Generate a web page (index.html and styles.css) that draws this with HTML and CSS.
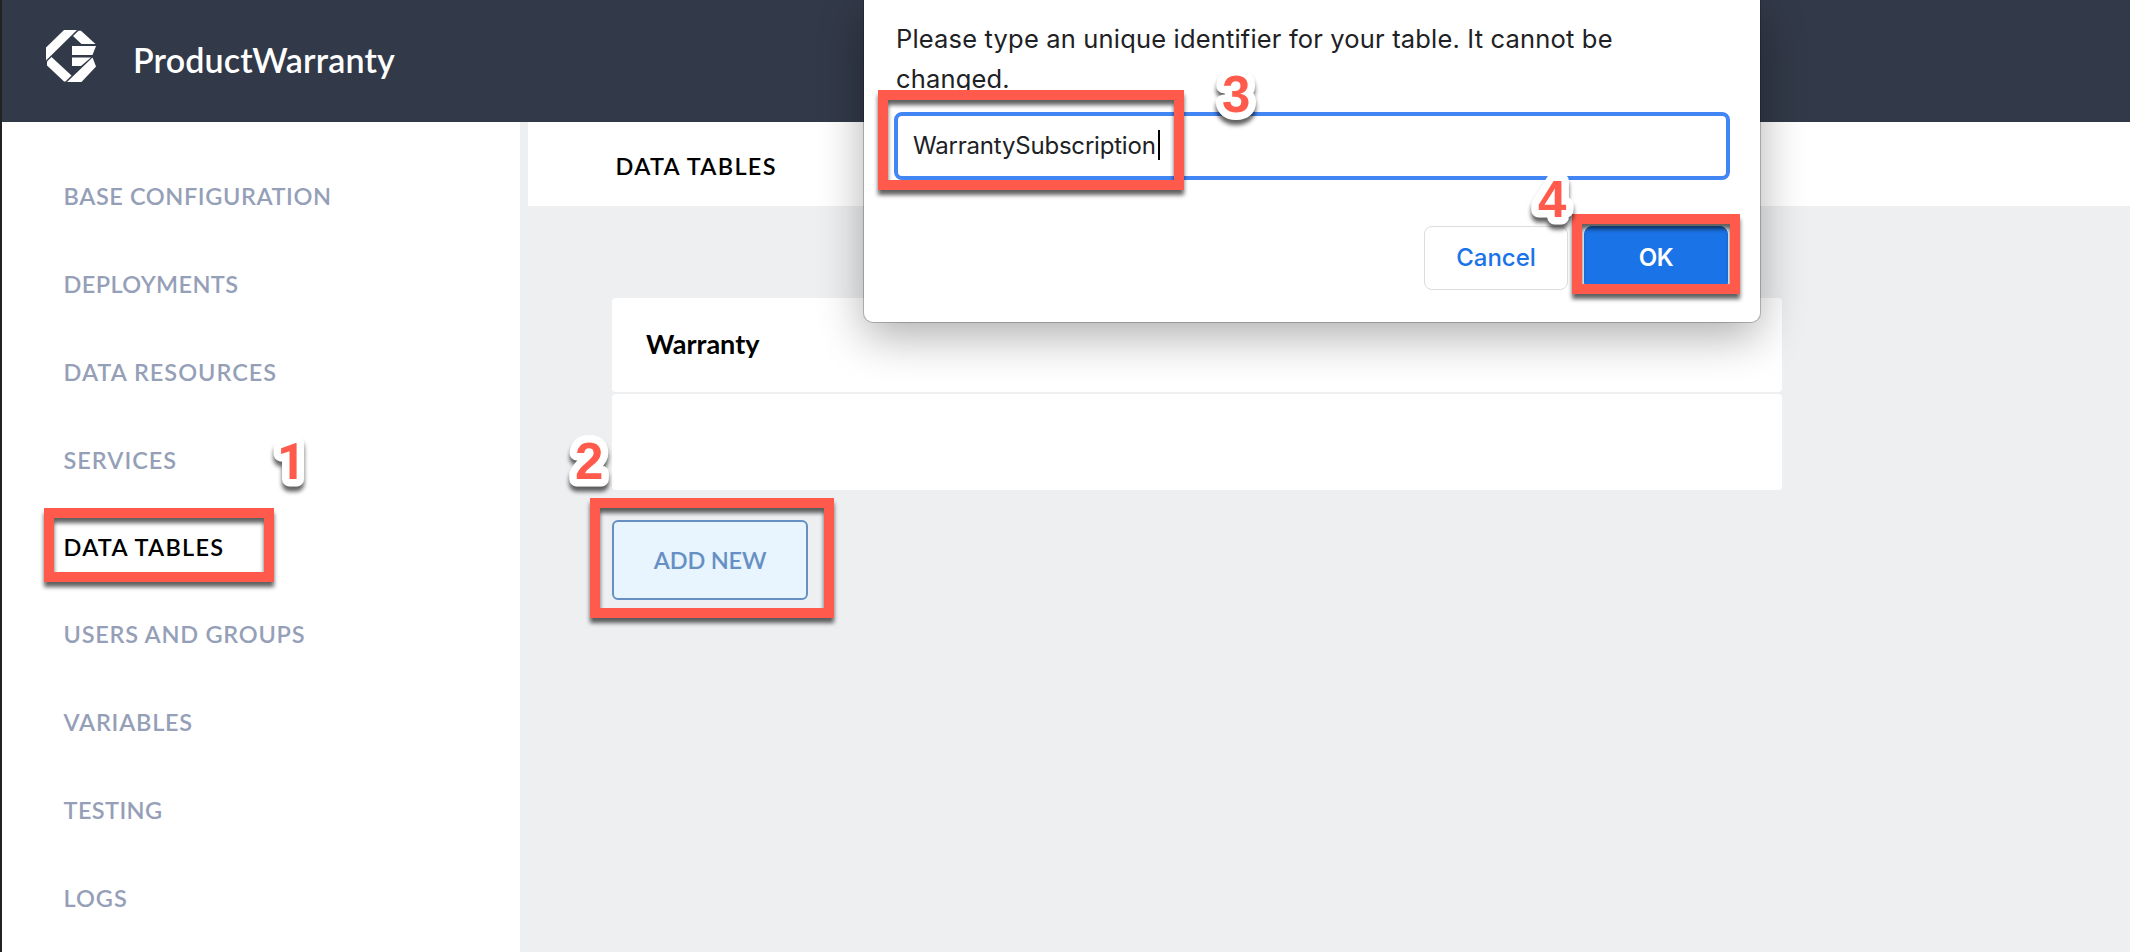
FILE: index.html
```html
<!DOCTYPE html>
<html lang="en">
<head>
<meta charset="utf-8">
<title>ProductWarranty</title>
<link rel="stylesheet" href="styles.css">
</head>
<body>
<div class="app">
  <header class="topbar">
    <svg class="logo" width="50" height="52" viewBox="0 0 50 52" fill="#fff">
      <path d="M18 0H31L0 30.500V17.500Z"/>
      <path d="M32.500 0.800H35L49.500 14H35.500L27 6Z"/>
      <path d="M26 16H50L46.500 25H26Z"/>
      <path d="M26 27.500H45L35 36H26Z"/>
      <path d="M1 31.500L5.500 27L25.500 45.500L19.500 51.500H18L1 35.500Z"/>
      <path d="M46.500 27.500L50 36.500L35.500 52H21Z"/>
    </svg>
    <h1 class="title">ProductWarranty</h1>
  </header>
  <div class="body">
    <nav class="sidebar">
      <a class="item">BASE CONFIGURATION</a>
      <a class="item tight">DEPLOYMENTS</a>
      <a class="item wide">DATA RESOURCES</a>
      <a class="item wide">SERVICES</a>
      <a class="item active">DATA TABLES</a>
      <a class="item semi">USERS AND GROUPS</a>
      <a class="item semi">VARIABLES</a>
      <a class="item tight">TESTING</a>
      <a class="item wide">LOGS</a>
    </nav>
    <main class="main">
      <div class="page-head">DATA TABLES</div>
      <div class="content">
        <div class="row">Warranty</div>
        <div class="row"></div>
        <button class="add">ADD NEW</button>
      </div>
    </main>
  </div>
</div>

<div class="dialog">
  <p class="message">Please type an unique identifier for your table. It cannot be<br>changed.</p>
  <div class="field">WarrantySubscription<i class="caret"></i></div>
  <div class="actions">
    <button class="btn">Cancel</button>
    <button class="btn primary">OK</button>
  </div>
</div>

<div class="mark mark-1"></div>
<div class="mark mark-2"></div>
<div class="mark mark-3"></div>
<div class="mark mark-4"></div>
<svg class="step step-1" width="60" height="70"><text x="17" y="52">1</text></svg>
<svg class="step step-2" width="60" height="70"><text x="16" y="52">2</text></svg>
<svg class="step step-3" width="60" height="70"><text x="16" y="52">3</text></svg>
<svg class="step step-4" width="60" height="70"><text x="16" y="52">4</text></svg>
</body>
</html>
```
FILE: styles.css
```css
* { box-sizing: border-box; }
body {
  margin: 0;
  width: 2130px;
  height: 952px;
  overflow: hidden;
  position: relative;
  font-family: Lato, "Open Sans", sans-serif;
  color: #000;
}
.app {
  height: 952px;
  border-left: 2px solid #222224;
  background: #eeeff1;
  display: flex;
  flex-direction: column;
}
.topbar {
  height: 122px;
  flex: none;
  background: #323948;
  display: flex;
  align-items: flex-start;
  padding: 30px 0 0 44px;
  gap: 37px;
}
.title {
  margin: 10px 0 0;
  font-size: 34px;
  line-height: 40px;
  font-weight: 600;
  letter-spacing: 0.150px;
  color: #fff;
}
.body { flex: 1; display: flex; gap: 8px; }
.sidebar {
  width: 518px;
  flex: none;
  background: #fff;
  padding: 29px 0 0 61.500px;
}
.item {
  display: flex;
  align-items: center;
  height: 88px;
  padding-top: 1px;
  font-size: 23.500px;
  font-weight: 600;
  letter-spacing: 0.600px;
  color: #969fb8;
}
.item.tight { letter-spacing: 0.400px; }
.item.semi { letter-spacing: 0.750px; }
.item.wide { letter-spacing: 1px; }
.item.active { color: #000; height: 86px; letter-spacing: 1.250px; }
.main { flex: 1; }
.page-head {
  height: 84px;
  background: #fff;
  display: flex;
  align-items: center;
  padding: 3px 0 0 87.500px;
  font-size: 23.500px;
  font-weight: 600;
  letter-spacing: 1.300px;
}
.content {
  padding: 92px 348px 0 84px;
  display: flex;
  flex-direction: column;
  align-items: flex-start;
}
.row {
  width: 1170px;
  height: 94px;
  margin-bottom: 2px;
  border-radius: 4px;
  background: #fff;
  display: flex;
  align-items: center;
  padding: 0 0 3px 34px;
  font-size: 27px;
  font-weight: 700;
}
.row + .row { height: 96px; margin-bottom: 30px; }
.add {
  width: 196px;
  height: 80px;
  padding: 0 0 1px;
  border: 2px solid #6690c4;
  border-radius: 6px;
  background: #e8f4fe;
  color: #6690c4;
  font: 600 23.500px Lato, sans-serif;
  letter-spacing: -0.200px;
}
.dialog {
  position: absolute;
  left: 864px;
  top: 0;
  width: 896px;
  height: 322px;
  padding: 19px 30px 0;
  border-radius: 0 0 9px 9px;
  background: #fff;
  box-shadow: 0 0 0 1px rgba(0, 0, 0, .22), 0 14px 46px rgba(0, 0, 0, .32);
  font-family: Inter, Roboto, sans-serif;
  color: #202124;
}
.message {
  margin: 0 0 13px 2px;
  font-size: 25.500px;
  line-height: 40px;
  letter-spacing: 0.170px;
  white-space: nowrap;
}
.field {
  height: 68px;
  border: 4px solid #4285f4;
  border-radius: 8px;
  display: flex;
  align-items: center;
  padding: 0 0 2px 15px;
  font-size: 24px;
  letter-spacing: -0.200px;
}
.caret { width: 2px; height: 30px; margin-left: 2px; background: #000; }
.actions {
  display: flex;
  justify-content: flex-end;
  gap: 16px;
  padding: 46px 2px 0 0;
}
.btn {
  width: 144px;
  height: 64px;
  padding: 0 0 2px;
  border: 1px solid #dadce0;
  border-radius: 8px;
  background: #fff;
  color: #1a73e8;
  font: 500 24px Inter, Roboto, sans-serif;
}
.btn.primary { background: #1b73e8; border-color: #1b73e8; color: #fff; font-weight: 600; letter-spacing: -0.500px; }
.mark {
  position: absolute;
  border: 10px solid #ff5a4b;
  filter: drop-shadow(0 5px 2px rgba(0, 0, 0, .62));
}
.mark-1 { left: 44px; top: 508px; width: 230px; height: 74px; }
.mark-2 { left: 590px; top: 498px; width: 244px; height: 120px; }
.mark-3 { left: 878px; top: 90px; width: 306px; height: 100px; }
.mark-4 { left: 1572px; top: 214px; width: 168px; height: 80px; }
.step {
  position: absolute;
  overflow: visible;
  font: 700 51px "Liberation Sans", Arial, sans-serif;
  fill: #ff5a4b;
  stroke: #fff;
  stroke-width: 15px;
  stroke-linejoin: round;
  paint-order: stroke fill;
  filter: drop-shadow(0 5px 2px rgba(0, 0, 0, .62));
}
.step-1 { left: 260px; top: 427px; font-family: Roboto, sans-serif; font-size: 50px; }
.step-2 { left: 559px; top: 427px; }
.step-3 { left: 1206px; top: 60px; }
.step-4 { left: 1522px; top: 165px; }
```
